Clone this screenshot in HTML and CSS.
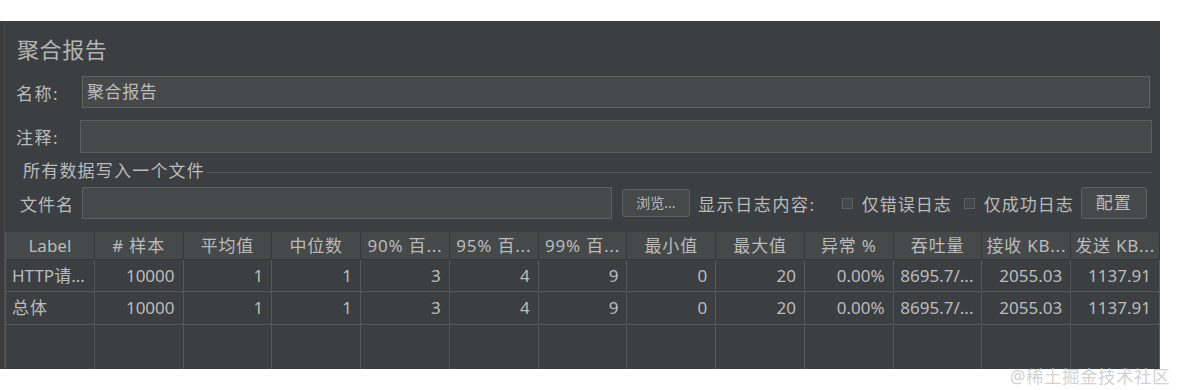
FILE: index.html
```html
<!DOCTYPE html>
<html lang="zh-CN">
<head>
<meta charset="utf-8">
<title>聚合报告</title>
<link rel="stylesheet" href="styles.css">
</head>
<body>
<div class="page">
  <div class="panel">
    <div class="title">聚合报告</div>
    <div class="row row-name">
      <span class="label">名称:</span>
      <div class="input input-name">聚合报告</div>
    </div>
    <div class="row row-comment">
      <span class="label">注释:</span>
      <div class="input input-comment"></div>
    </div>
    <div class="legend-row">
      <span class="legend">所有数据写入一个文件</span>
      <span class="legend-line"></span>
    </div>
    <div class="row row-file">
      <span class="label label-file">文件名</span>
      <div class="input input-file"></div>
      <div class="btn btn-browse">浏览...</div>
      <span class="text show-log">显示日志内容:</span>
      <span class="check"></span>
      <span class="text">仅错误日志</span>
      <span class="check"></span>
      <span class="text">仅成功日志</span>
      <div class="btn btn-config">配置</div>
    </div>
    <div class="table">
      <div class="th latin">Label</div>
      <div class="th"># 样本</div>
      <div class="th">平均值</div>
      <div class="th">中位数</div>
      <div class="th">90% 百...</div>
      <div class="th">95% 百...</div>
      <div class="th">99% 百...</div>
      <div class="th">最小值</div>
      <div class="th">最大值</div>
      <div class="th">异常 %</div>
      <div class="th">吞吐量</div>
      <div class="th">接收 KB...</div>
      <div class="th">发送 KB...</div>

      <div class="td left">HTTP请...</div>
      <div class="td">10000</div>
      <div class="td">1</div>
      <div class="td">1</div>
      <div class="td">3</div>
      <div class="td">4</div>
      <div class="td">9</div>
      <div class="td">0</div>
      <div class="td">20</div>
      <div class="td">0.00%</div>
      <div class="td">8695.7/...</div>
      <div class="td">2055.03</div>
      <div class="td">1137.91</div>

      <div class="td left cjk">总体</div>
      <div class="td">10000</div>
      <div class="td">1</div>
      <div class="td">1</div>
      <div class="td">3</div>
      <div class="td">4</div>
      <div class="td">9</div>
      <div class="td">0</div>
      <div class="td">20</div>
      <div class="td">0.00%</div>
      <div class="td">8695.7/...</div>
      <div class="td">2055.03</div>
      <div class="td">1137.91</div>

      <div class="tf"></div><div class="tf"></div><div class="tf"></div><div class="tf"></div><div class="tf"></div><div class="tf"></div><div class="tf"></div><div class="tf"></div><div class="tf"></div><div class="tf"></div><div class="tf"></div><div class="tf"></div><div class="tf"></div>
    </div>
  </div>
  <div class="watermark">@稀土掘金技术社区</div>
</div>
</body>
</html>
```

FILE: styles.css
```css
* { box-sizing: border-box; }
html, body { margin: 0; padding: 0; background: #ffffff; }
body {
  font-family: "Noto Sans", "Noto Sans CJK SC", sans-serif;
  color: #bbbbbb;
  width: 1179px;
  height: 390px;
  overflow: hidden;
}
.page {
  position: relative;
  padding-top: 21px;
  height: 390px;
}
.panel {
  width: 1160px;
  height: 348px;
  background: #3c3f41;
  border-left: 4px solid #3a3c3e;
  box-shadow: inset 1px 0 0 #47494b;
  display: flex;
  flex-direction: column;
}
.title {
  height: 55px;
  padding-left: 13px;
  font-size: 22px;
  letter-spacing: 0.6px;
  line-height: 56px;
  color: #b4b4b4;
}
.row {
  display: flex;
  align-items: center;
}
.label {
  font-size: 17px;
  letter-spacing: 1.5px;
  width: 64px;
  padding-left: 12px;
  flex: none;
}
.input {
  background: #45494a;
  border: 1px solid #646464;
  font-size: 17px;
  letter-spacing: 0.6px;
  color: #bbbbbb;
  padding-left: 4px;
  line-height: 30px;
}
.row-name { height: 32px; }
.input-name { width: 1068px; height: 32px; margin-left: 14px; }
.row-comment { height: 33px; margin-top: 12px; }
.input-comment { width: 1072px; height: 33px; margin-left: 12px; border-color: #5a5d5f; }
.legend-row {
  display: flex;
  align-items: center;
  height: 20px;
  margin-top: 8px;
  padding-left: 19px;
  padding-right: 8px;
}
.legend { font-size: 17px; letter-spacing: 1.2px; line-height: 20px; }
.legend-line {
  flex: 1;
  height: 1px;
  background: #535658;
  margin-left: 2px;
  margin-top: 2px;
}
.row-file { height: 32px; margin-top: 6px; }
.label-file { width: 78px; padding-left: 16px; letter-spacing: 1px; }
.input-file { width: 530px; height: 32px; border-color: #5e6163; }
.btn {
  background: #45494a;
  border: 1px solid #5e6163;
  border-radius: 3px;
  text-align: center;
  color: #bbbbbb;
  flex: none;
}
.btn-browse {
  width: 68px;
  height: 28px;
  line-height: 26px;
  font-size: 14px;
  margin-left: 10px;
}
.text { font-size: 17px; letter-spacing: 1px; flex: none; }
.show-log { margin-left: 8px; margin-right: 14px; letter-spacing: 1.6px; }
.check {
  width: 11px;
  height: 11px;
  border: 1px solid #5d6062;
  background: #43484a;
  margin-right: 9px;
  flex: none;
}
.text + .check { margin-left: 12px; }
.btn-config {
  width: 66px;
  height: 32px;
  line-height: 30px;
  font-size: 17px;
  letter-spacing: 1px;
  margin-left: 7px;
}
.table {
  margin-top: 13px;
  margin-left: 1px;
  width: 1155px;
  flex: 1;
  display: grid;
  grid-template-columns: repeat(13, 1fr);
  grid-template-rows: 28px 32px 33px 1fr;
  border-left: 1px solid #55585a;
}
.th {
  background: #45494a;
  border-right: 1px solid #35383a;
  border-bottom: 1px solid #35383a;
  text-align: center;
  font-size: 17px;
  letter-spacing: 0.8px;
  line-height: 27px;
  white-space: nowrap;
  overflow: hidden;
}
.th.latin { letter-spacing: 0; }
.td {
  border-right: 1px solid #55585a;
  border-bottom: 1px solid #55585a;
  text-align: right;
  padding-right: 8px;
  font-size: 17px;
  line-height: 31px;
  white-space: nowrap;
  overflow: hidden;
}
.td.left { text-align: left; padding-left: 6px; padding-right: 0; }
.td.cjk { letter-spacing: 1px; }
.tf { border-right: 1px solid #55585a; }
.watermark {
  position: absolute;
  right: 9px;
  top: 363px;
  font-size: 17.5px;
  color: #d2d2d2;
  letter-spacing: 0.5px;
}
```
